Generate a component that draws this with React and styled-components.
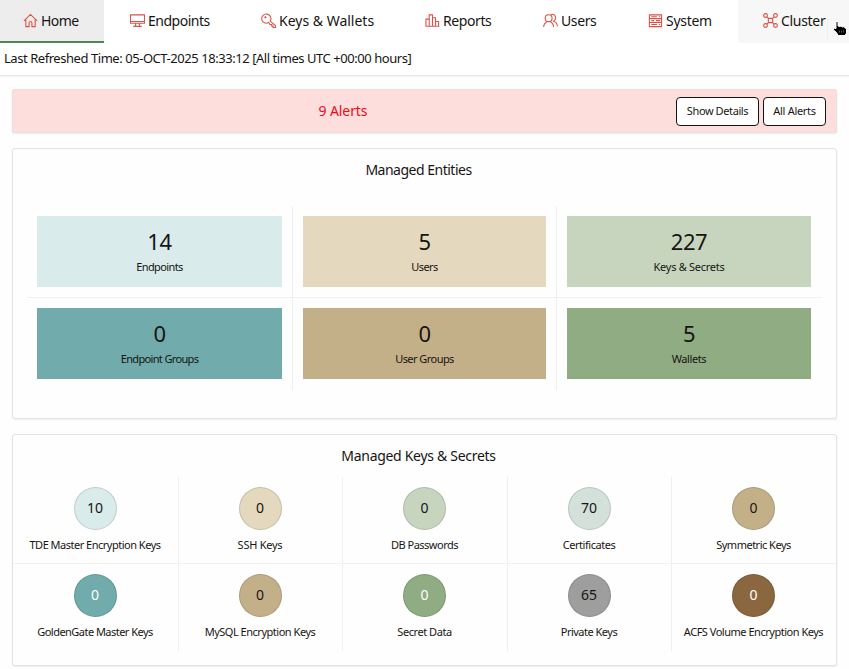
import React from "react";
import styled, { createGlobalStyle } from "styled-components";

const Global = createGlobalStyle`
  * { box-sizing: border-box; }
  body { margin: 0; background: #fff; color: #161513; font-family: "Noto Sans", "Open Sans", sans-serif; overflow: hidden; }
`;

const Page = styled.div`
  height: 669px;
  width: 849px;
  overflow: hidden;
  background: #fefefe;
`;
const Nav = styled.nav`
  display: grid;
  grid-template-columns: 104px 131px 165px 117px 106px 115px 111px;
  height: 43px;
  background: #fff;
`;
const Tab = styled.a`
  display: flex;
  align-items: center;
  padding: 0 0 1px ${(p) => p.$pad}px;
  gap: 3px;
  font-size: 14px;
  letter-spacing: ${(p) => p.$ls}px;
  white-space: nowrap;
  background: ${(p) => p.$bg || "transparent"};
  border-bottom: 2px solid ${(p) => (p.$active ? "#508556" : "transparent")};
  svg { flex: none; }
`;
const Cursor = styled.svg`
  position: absolute;
  left: 832px;
  top: 20px;
`;
const TabEdge = styled.i`
  align-self: flex-end;
  width: 1px;
  height: 21px;
  margin: 0 0 1px -1px;
  background: #eeeeee;
`;
const Refreshed = styled.div`
  height: 33px;
  padding-left: 4px;
  line-height: 30px;
  font-size: 13px;
  letter-spacing: -0.45px;
  background: #fff;
  border-bottom: 1px solid #e9e9e9;
  box-shadow: 0 1px 1px #f3f3f3;
`;
const Content = styled.main`
  display: flex;
  flex-direction: column;
  gap: 15px;
  padding: 13px 12px 0;
`;
const AlertBar = styled.section`
  height: 44px;
  display: flex;
  align-items: center;
  justify-content: flex-end;
  gap: 4px;
  padding-right: 10px;
  background: #fddedd;
  border: 1px solid #ecdedf;
  border-radius: 2px;
  box-shadow: 0 1px 2px rgba(0, 0, 0, 0.08);
`;
const AlertCount = styled.div`
  flex: 1;
  padding: 0 0 2px 1px;
  text-align: center;
  font-size: 14px;
  letter-spacing: -0.1px;
  color: #ee0a16;
`;
const Button = styled.button`
  width: ${(p) => p.$w}px;
  height: 29px;
  padding: 0 0 1px;
  border: 1px solid #161513;
  border-radius: 4px;
  background: #fff;
  color: #161513;
  font: 11px "Noto Sans", sans-serif;
  letter-spacing: ${(p) => p.$ls}px;
  white-space: nowrap;
`;
const Panel = styled.section`
  height: ${(p) => p.$h}px;
  background: #fefefe;
  border: 1px solid #e3e3e3;
  border-radius: 3px;
  box-shadow: 0 1px 2px rgba(0, 0, 0, 0.07);
`;
const Title = styled.h2`
  margin: 0;
  height: 42px;
  padding-right: 12px;
  line-height: 41px;
  text-align: center;
  font-size: 14px;
  font-weight: 400;
  letter-spacing: ${(p) => p.$ls}px;
`;
const Entities = styled.div`
  display: grid;
  grid-template-columns: 266px 264px 265px;
  grid-template-rows: 92px 92px;
  margin: 15px 14px 0;
`;
const EntityCell = styled.div`
  padding: 10px ${(p) => (p.$last ? 11 : 10)}px 10px 10px;
  border-right: ${(p) => (p.$last ? 0 : 1)}px solid #efefef;
  border-bottom: ${(p) => (p.$bottom ? 0 : 1)}px solid #f1f1f1;
`;
const Tile = styled.div`
  height: 71px;
  display: flex;
  flex-direction: column;
  align-items: center;
  padding-top: 10px;
  background: ${(p) => p.$bg};
`;
const Big = styled.div`
  height: 32px;
  line-height: 31px;
  font-size: 22px;
  letter-spacing: -0.4px;
`;
const Small = styled.div`
  height: 18px;
  line-height: 18px;
  font-size: 11px;
  letter-spacing: ${(p) => p.$ls}px;
  white-space: nowrap;
`;
const KeyGrid = styled.div`
  display: grid;
  grid-template-columns: 166px 164px 165px 164px 164px;
  grid-template-rows: 87px 87px;
`;
const KeyCell = styled.div`
  display: flex;
  flex-direction: column;
  align-items: center;
  padding: 10px 1px 0 0;
  border-right: ${(p) => (p.$last ? 0 : 1)}px solid #f0f0f0;
  border-bottom: ${(p) => (p.$bottom ? 0 : 1)}px solid #f1f1f1;
`;
const Circle = styled.div`
  width: 43px;
  height: 43px;
  margin-bottom: 6px;
  line-height: 40px;
  text-align: center;
  border: 1px solid rgba(0, 0, 0, 0.12);
  border-radius: 50%;
  font-size: 14px;
  background: ${(p) => p.$bg};
  color: ${(p) => (p.$light ? "#fff" : "#161513")};
`;

const drawings = {
  home: <path d="M1 8.500 8 1.500l7 7M3 7v7.500h3.500v-4q0-1.500 1.500-1.500t1.500 1.500v4H13V7" />,
  monitor: <path d="M.500 2h15v9H.500zM.500 9h15M6 11v3m4-3v3M3.500 14.300h9" />,
  key: <><path d="M9.800 8.600 15.500 13.500v2H13V14h-1.500v-1.700H9.500L8.200 10.200A4.900 4.900 0 1 1 9.800 8.600Z" /><circle cx="4.700" cy="4.700" r=".6" /></>,
  bars: <path d="M1 14V6.500h3.500V14m0 0V2H8v12m0 0V5h3.300v9m0 0V9h3.200v5M.500 14.200H15.300" />,
  users: <><circle cx="6" cy="5.500" r="3.700" /><path d="M.700 15c0-3.500 1-4.500 3.800-6M7.500 9c2.800 1.500 3.800 2.500 3.800 6M8.500 2c2-1.500 5 0 5 3 0 2-1 3-2.200 3.700 2.700 1 4 2.500 4 5.300" /></>,
  system: <path d="M1.500 2h13v12.500h-13zM1.500 6h13M1.500 10.200h13M3.500 4h6m2 0h1.500M3.500 8.100h3m2 0H13M3.500 12.300h6m2 0h1.500" />,
  cluster: <><circle cx="2.700" cy="2.700" r="2" /><circle cx="13.300" cy="2.700" r="2" /><circle cx="2.700" cy="13.300" r="2" /><circle cx="13.300" cy="13.300" r="2" /><path d="M5.700 5.700h4.600v4.600H5.700zM4.200 4.200l1.500 1.500m6.100-1.500-1.500 1.500m-6.100 6.100 1.500-1.500m6.100 1.500-1.500-1.500" /></>,
};
const Icon = ({ name }) => (
  <svg width="15" height="15" viewBox="0 0 16 16" fill="none" stroke="#dc5148" strokeWidth="1.150">
    {drawings[name]}
  </svg>
);

const tabs = [
  ["Home", "home", 23, -0.6],
  ["Endpoints", "monitor", 26, -0.5],
  ["Keys & Wallets", "key", 26, 0],
  ["Reports", "bars", 25, -0.4],
  ["Users", "users", 26, -0.4],
  ["System", "system", 25, -0.3],
  ["Cluster", "cluster", 25, -0.3],
];
const entities = [
  [14, "Endpoints", "#d9ebea", -0.6],
  [5, "Users", "#e4d9bf", -0.6],
  [227, "Keys & Secrets", "#c7d5be", -0.28],
  [0, "Endpoint Groups", "#71abab", -0.65],
  [0, "User Groups", "#c4b088", -0.55],
  [5, "Wallets", "#90ac83", -0.4],
];
const keys = [
  [10, "TDE Master Encryption Keys", "#d9ebea", false, -0.5],
  [0, "SSH Keys", "#e4d9bf", false, -0.25],
  [0, "DB Passwords", "#c7d5be", false, -0.5],
  [70, "Certificates", "#d4e0da", false, -0.45],
  [0, "Symmetric Keys", "#c4b088", false, -0.5],
  [0, "GoldenGate Master Keys", "#71abab", true, -0.53],
  [0, "MySQL Encryption Keys", "#c4b088", false, -0.48],
  [0, "Secret Data", "#90ac83", true, -0.45],
  [65, "Private Keys", "#9e9e9e", false, -0.5],
  [0, "ACFS Volume Encryption Keys", "#8b6740", true, -0.48],
];

export default function App() {
  return (
    <Page>
      <Global />
      <Nav>
        {tabs.map(([label, icon, pad, ls], i) => (
          <Tab key={label} $pad={pad} $ls={ls} $active={i === 0} $bg={i === 0 ? "#ededed" : i === 6 ? "#f7f7f7" : ""}>
            <Icon name={icon} />
            {label}
            {i === 6 && <TabEdge />}
          </Tab>
        ))}
      </Nav>
      <Cursor width="16" height="17" viewBox="0 0 16 17">
        <path d="M4 1.500h2V6l2 .5 1-.5 1.500 1 1.500-.5 1 1.500 1.500.5v4.500L13 15.500H6l-1.500-3L1.500 10V8L4 8.500Z" fill="#000" stroke="#fff" />
        <path d="M7.500 10.500v2m2-2v2m2-2v2" stroke="#555" />
      </Cursor>
      <Refreshed>Last Refreshed Time: 05-OCT-2025 18:33:12 [All times UTC +00:00 hours]</Refreshed>
      <Content>
        <AlertBar>
          <AlertCount>9 Alerts</AlertCount>
          <Button $w={83} $ls={-0.4}>Show Details</Button>
          <Button $w={63} $ls={-0.3}>All Alerts</Button>
        </AlertBar>
        <Panel $h={271}>
          <Title $ls={-0.5}>Managed Entities</Title>
          <Entities>
            {entities.map(([count, label, bg, ls], i) => (
              <EntityCell key={label} $last={i % 3 === 2} $bottom={i > 2}>
                <Tile $bg={bg}>
                  <Big>{count}</Big>
                  <Small $ls={ls}>{label}</Small>
                </Tile>
              </EntityCell>
            ))}
          </Entities>
        </Panel>
        <Panel $h={232}>
          <Title $ls={-0.3}>Managed Keys & Secrets</Title>
          <KeyGrid>
            {keys.map(([count, label, bg, light, ls], i) => (
              <KeyCell key={label} $last={i % 5 === 4} $bottom={i > 4}>
                <Circle $bg={bg} $light={light}>{count}</Circle>
                <Small $ls={ls}>{label}</Small>
              </KeyCell>
            ))}
          </KeyGrid>
        </Panel>
      </Content>
    </Page>
  );
}
